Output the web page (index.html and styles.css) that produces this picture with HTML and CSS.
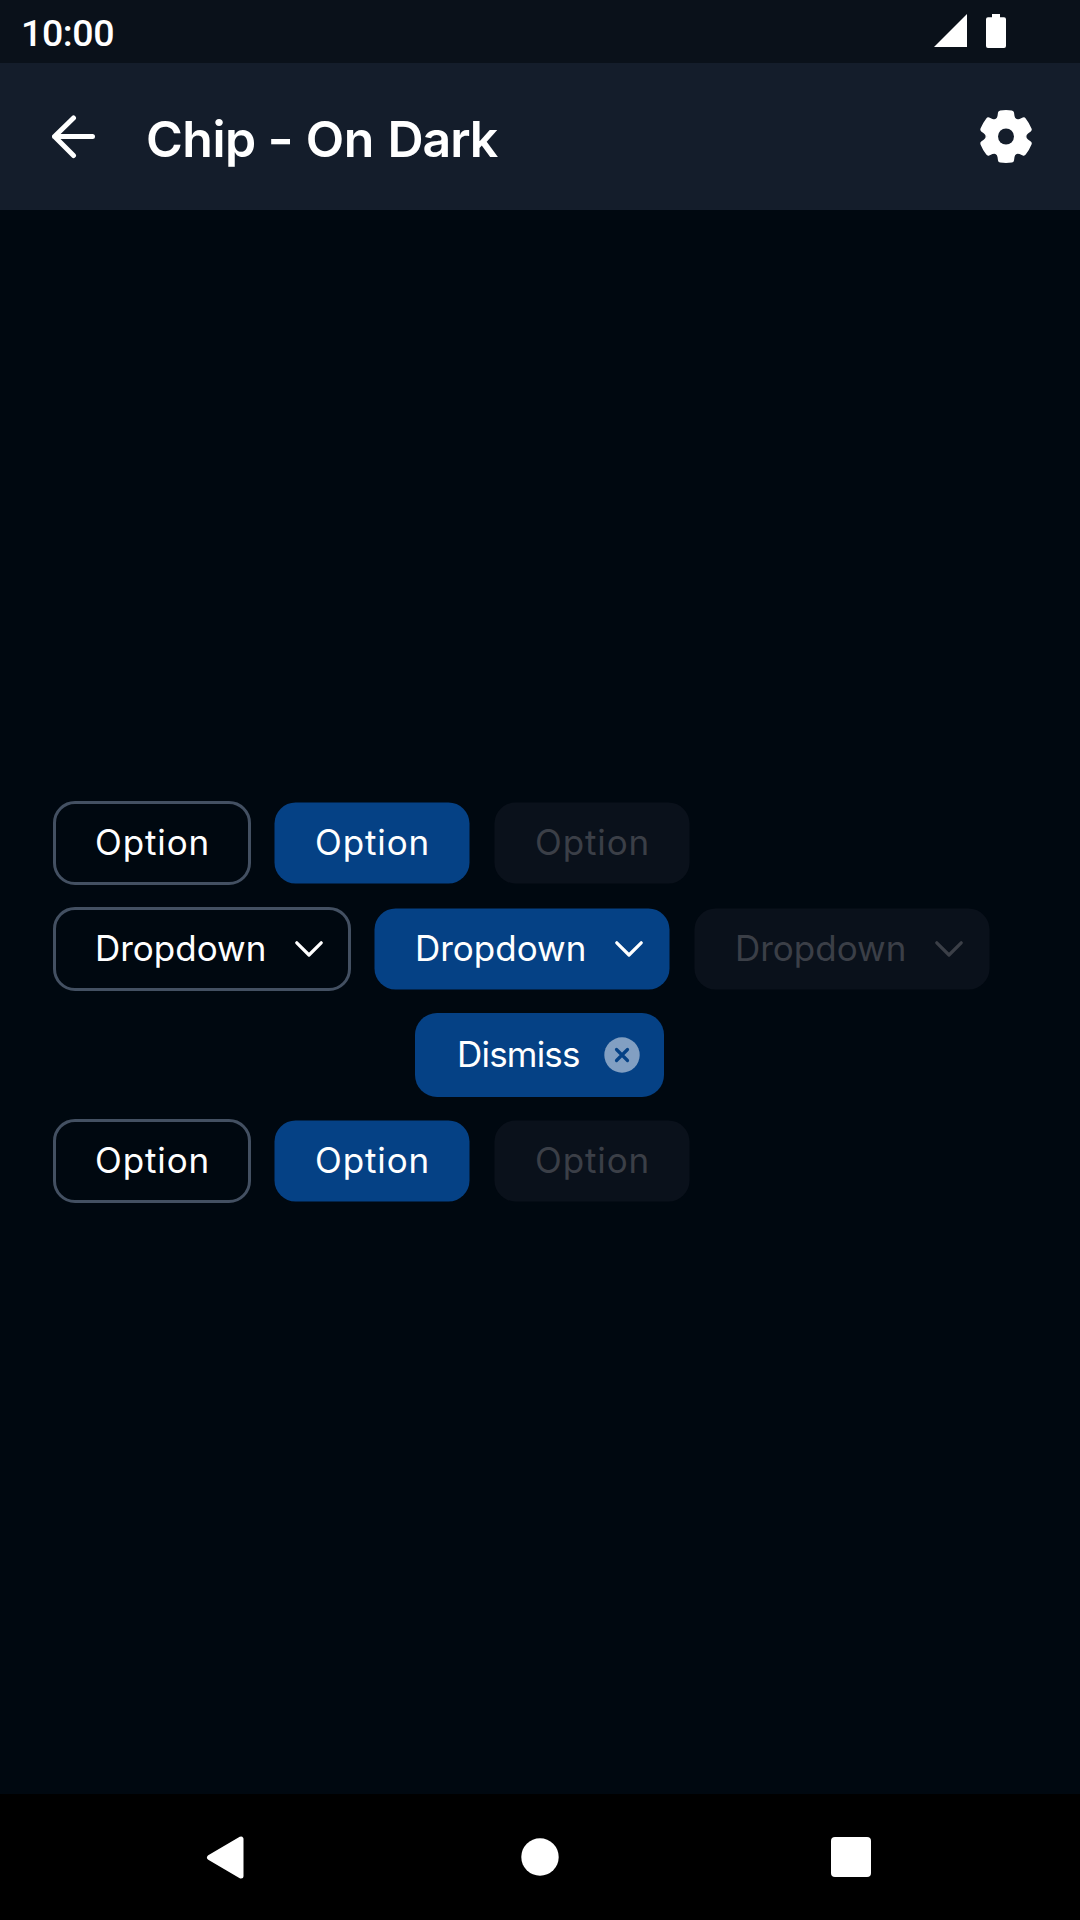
FILE: index.html
```html
<!DOCTYPE html>
<html lang="en">
<head>
<meta charset="utf-8">
<title>Chip - On Dark</title>
<link rel="stylesheet" href="styles.css">
</head>
<body>
<svg width="0" height="0" class="defs">
  <defs>
    <path id="chevron" d="M1.8 1.8 14 14 26.2 1.8" fill="none" stroke="currentColor" stroke-width="3.2" stroke-linecap="round" stroke-linejoin="round"/>
    <path id="tooth" d="M0 0-10.4-17.4Q-8.8-18.3-8.5-20.5L-8-24Q-7.7-25.9-5.8-26.1 0-26.9 5.8-26.1 7.7-25.9 8-24L8.5-20.5Q8.8-18.3 10.4-17.4Z"/>
  </defs>
</svg>
<div class="screen">
  <div class="status">
    <span class="time">10:00</span>
    <svg class="signal" width="33" height="33" viewBox="0 0 33 33"><path d="M33 0V33H0Z" fill="#fff"/></svg>
    <svg class="battery" width="20" height="34" viewBox="0 0 20 34"><path d="M6 0h8v3.3h4q2 0 2 2V32q0 2-2 2H2q-2 0-2-2V5.3q0-2 2-2h4Z" fill="#fff"/></svg>
  </div>
  <header class="toolbar">
    <svg class="back" width="44" height="44" viewBox="0 0 44 44"><path d="M21.500 3 2.500 21.500l19 19M2.500 21.500H40.500" fill="none" stroke="#fff" stroke-width="5" stroke-linecap="round" stroke-linejoin="round"/></svg>
    <h1 class="title"><span>Chip</span> <span class="dash">-</span> <span>On</span> <span class="last">Dark</span></h1>
    <svg class="gear" width="54" height="54" viewBox="-27 -26.5 54 54">
      <g fill="#fff">
        <circle r="18.5"/>
        <use href="#tooth"/>
        <use href="#tooth" transform="rotate(60)"/>
        <use href="#tooth" transform="rotate(120)"/>
        <use href="#tooth" transform="rotate(180)"/>
        <use href="#tooth" transform="rotate(240)"/>
        <use href="#tooth" transform="rotate(300)"/>
      </g>
      <circle r="8" fill="#141d2b"/>
    </svg>
  </header>
  <main class="content">
    <div class="row">
      <div class="chip option outlined"><span>Option</span></div>
      <div class="chip option selected"><span>Option</span></div>
      <div class="chip option disabled"><span>Option</span></div>
    </div>
    <div class="row">
      <div class="chip dropdown outlined"><span>Dropdown</span><svg class="arrow" width="28" height="16" viewBox="0 0 28 16"><use href="#chevron"/></svg></div>
      <div class="chip dropdown selected"><span>Dropdown</span><svg class="arrow" width="28" height="16" viewBox="0 0 28 16"><use href="#chevron"/></svg></div>
      <div class="chip dropdown disabled"><span>Dropdown</span><svg class="arrow" width="28" height="16" viewBox="0 0 28 16"><use href="#chevron"/></svg></div>
    </div>
    <div class="row centered">
      <div class="chip dismiss"><span>Dismiss</span><svg class="close" width="36" height="36" viewBox="-18 -18 36 36"><circle r="17.7" fill="#829fc2"/><path d="M-5.5-5.5 5.5 5.5M5.5-5.5-5.5 5.5" stroke="#054185" stroke-width="3.2" stroke-linecap="round"/></svg></div>
    </div>
    <div class="row">
      <div class="chip option outlined"><span>Option</span></div>
      <div class="chip option selected"><span>Option</span></div>
      <div class="chip option disabled"><span>Option</span></div>
    </div>
  </main>
  <nav class="navbar">
    <svg class="nav-back" width="38" height="43" viewBox="0 0 38 43"><path d="M35 3V40L3.500 21.500Z" fill="#fff" stroke="#fff" stroke-width="5" stroke-linejoin="round"/></svg>
    <svg class="nav-home" width="38" height="38" viewBox="0 0 38 38"><circle cx="19" cy="19" r="18.7" fill="#fff"/></svg>
    <span class="nav-recent"></span>
  </nav>
</div>
</body>
</html>
```
FILE: styles.css
```css
* { box-sizing: border-box; }
body { margin: 0; background: #000810; color: #fff; }
.defs { display: block; }
.screen {
  width: 1080px;
  height: 1920px;
  display: flex;
  flex-direction: column;
  font-family: Inter, sans-serif;
}
.status {
  height: 63px;
  background: #0a111a;
  display: flex;
  align-items: flex-start;
  padding: 14px 74px 0 21px;
}
.time {
  font: 500 37.5px/38px Roboto, sans-serif;
  letter-spacing: -0.4px;
  margin: 0 auto 0 0;
}
.battery { margin-left: 19px; }
.toolbar {
  height: 147px;
  background: #141d2b;
  display: flex;
  align-items: center;
  padding: 0 47px 0 52px;
}
.title {
  margin: 5px auto 0 50px;
  font-size: 50px;
  line-height: 60px;
  font-weight: 600;
  letter-spacing: -0.5px;
  word-spacing: 1.5px;
  white-space: nowrap;
}
.dash { display: inline-block; transform: scaleX(1.15); }
.last { letter-spacing: -1px; }
.content {
  flex: 1;
  padding: 591px 53px 0;
  display: flex;
  flex-direction: column;
  gap: 22px;
}
.row { display: flex; gap: 22px; }
.centered { justify-content: center; }
.chip {
  height: 84px;
  display: flex;
  align-items: center;
  padding-left: 42px;
  border-radius: 22px;
  font-size: 35px;
  line-height: 42px;
  white-space: nowrap;
}
.chip span { margin-bottom: 2px; }
.option { width: 198px; letter-spacing: 0.9px; }
.dropdown { width: 298px; letter-spacing: 0; }
.outlined { border: 3px solid #435062; padding-left: 39px; }
.outlined .arrow { margin-right: 25px; }
.selected { background: #054185; clip-path: inset(1.5px round 21px); }
.disabled { background: #0a111b; color: #3b3f47; clip-path: inset(1.5px round 21px); }
.arrow { margin: 0 28px 0 auto; }
.dismiss { width: 249px; background: #054185; margin-right: 1px; letter-spacing: -0.8px; }
.close { margin: 0 24px 0 auto; }
.navbar {
  height: 126px;
  background: #000;
  display: flex;
  align-items: center;
  justify-content: space-between;
  padding: 0 209px 0 206px;
}
.nav-home { margin-left: 68px; margin-right: 63px; }
.nav-recent { width: 40px; height: 40px; border-radius: 4px; background: #fff; }
```
